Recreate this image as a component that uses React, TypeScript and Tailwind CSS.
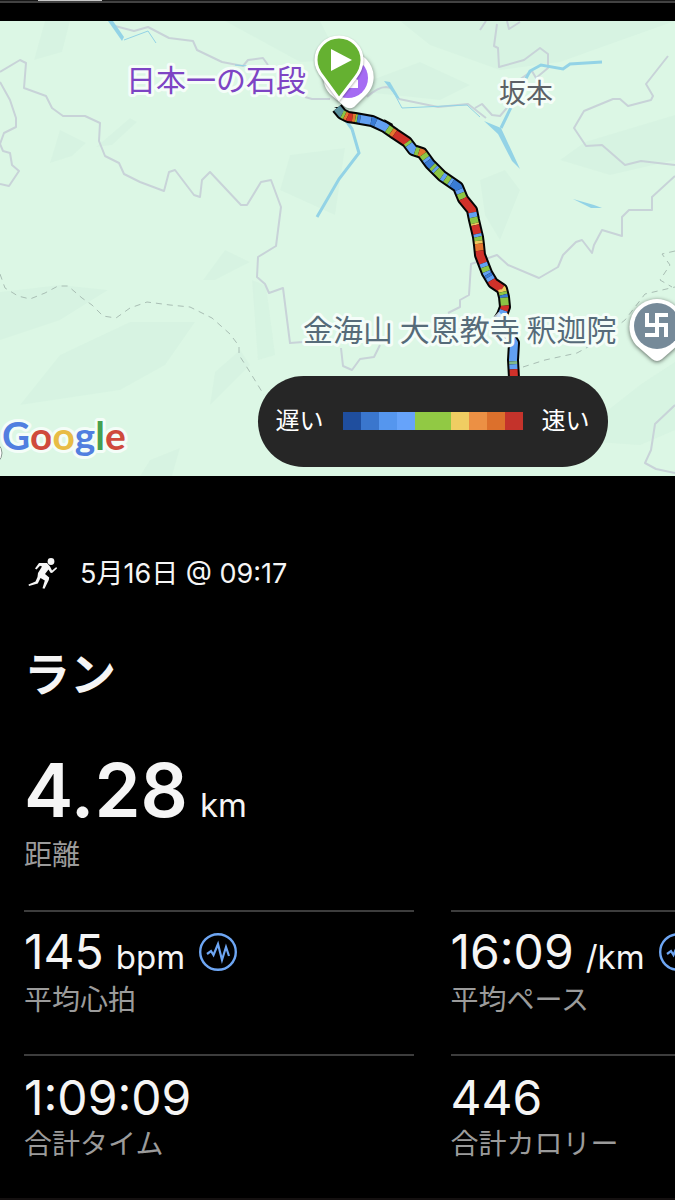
import type { ReactNode } from "react";

type Stat = {
  label: string;
  value: string;
  unit?: string;
  hasTrend?: boolean;
};

const STATS: Stat[] = [
  { label: "平均心拍", value: "145", unit: "bpm", hasTrend: true },
  { label: "平均ペース", value: "16:09", unit: "/km", hasTrend: true },
  { label: "合計タイム", value: "1:09:09" },
  { label: "合計カロリー", value: "446" },
];

const LEGEND_COLORS = [
  "#1f4e9e",
  "#3a76cd",
  "#5596ee",
  "#66a3fa",
  "#91c944",
  "#91c944",
  "#f0cd62",
  "#ec9044",
  "#dc702c",
  "#c4332b",
];

const BLUE = "#3a7bd5";
const LIGHT = "#62a0f2";
const GREEN = "#8cc544";
const YELLOW = "#ecc95c";
const ORANGE = "#e5752f";
const RED = "#d0312a";

const ROUTE =
  "M337 108L342 114L348 117L355 118L372 121L385 127L395 134L407 142L413 150L422 153L430 164L442 176L458 187L463 199L472 210L474 220L478 237L479 245L480 255L487 273L493 283L502 289L504 297L505 307L502 315L497 323L510 337L514 343L513 360L514 378";

// [end distance along the route, pace colour]
const PACE: [number, string][] = [
  [8, "#5a93a0"],
  [11, GREEN],
  [14, ORANGE],
  [19, RED],
  [22, ORANGE],
  [24, GREEN],
  [27, BLUE],
  [38, LIGHT],
  [43, BLUE],
  [56, LIGHT],
  [61, GREEN],
  [65, ORANGE],
  [80, RED],
  [83, GREEN],
  [92, LIGHT],
  [96, GREEN],
  [101, ORANGE],
  [106, GREEN],
  [109, LIGHT],
  [116, BLUE],
  [119, GREEN],
  [122, LIGHT],
  [130, GREEN],
  [134, LIGHT],
  [139, GREEN],
  [142, LIGHT],
  [152, BLUE],
  [156, LIGHT],
  [162, GREEN],
  [179, RED],
  [184, LIGHT],
  [190, GREEN],
  [192, YELLOW],
  [201, RED],
  [204, LIGHT],
  [208, GREEN],
  [211, YELLOW],
  [218, ORANGE],
  [231, RED],
  [235, LIGHT],
  [240, GREEN],
  [243, LIGHT],
  [246, BLUE],
  [250, LIGHT],
  [264, RED],
  [267, YELLOW],
  [270, GREEN],
  [273, BLUE],
  [281, GREEN],
  [286, RED],
  [345, LIGHT],
  [348, "#7fb98a"],
  [353, LIGHT],
  [370, RED],
];

function MapLabel({
  x,
  y,
  size,
  color,
  children,
}: {
  x: number;
  y: number;
  size: number;
  color: string;
  children: ReactNode;
}) {
  return (
    <text
      x={x}
      y={y}
      fontSize={size}
      fill={color}
      stroke="#f4fdf8"
      strokeWidth={6}
      strokeLinejoin="round"
      paintOrder="stroke"
    >
      {children}
    </text>
  );
}

function RouteMap() {
  return (
    <svg viewBox="0 21 675 455" className="block h-auto w-full bg-[#dcf7e5]">
      {/* Terrain shading */}
      <g fill="#cfeedd" opacity="0.35">
        <path d="M45 21H70L62 52L34 60Z" />
        <path d="M60 130L86 143L72 156L50 163Z" />
        <path d="M130 118L137 122L112 145L96 147Z" />
        <path d="M225 21H320L340 60L300 62Z" />
        <path d="M400 21H675L560 62L500 70L430 45Z" />
        <path d="M345 90L420 62L470 85L440 100Z" />
        <path d="M290 155L345 148L335 215L280 190Z" />
        <path d="M480 180L505 170L520 190L500 240L485 215Z" />
        <path d="M560 160L585 142L675 115V160L610 175Z" />
        <path d="M0 292L60 285L108 290L60 320L0 340Z" />
        <path d="M130 322H195L165 365L120 390L20 405L60 355Z" />
        <path d="M203 280L225 250L250 262L215 280Z" />
        <path d="M240 350L215 372L210 405L250 365Z" />
        <path d="M252 280L266 286L275 355L258 360Z" />
        <path d="M570 440L640 385L675 362V430L640 445Z" />
        <path d="M150 460L180 448L172 476H140Z" />
      </g>

      {/* Boundaries and minor roads */}
      <g fill="none" stroke="#c8d3d8" strokeWidth="2" strokeLinejoin="round">
        <path d="M0 72L20 60L26 63L24 88L46 96L52 108L63 116H85L100 123L99 141L105 156L119 163L124 174L140 182L164 191L169 172L175 170L194 195L200 197L202 180L210 172L241 205H247L261 182L271 180L281 207L276 246L258 257L257 277L265 284L269 293L283 288L290 343L303 342" />
        <path d="M0 82L10 100L16 118V127L4 133L0 144L3 151L10 153L12 165L19 171L9 186L0 184" />
        <path d="M115 26L134 31L148 27L169 38L193 41L197 50L222 62L243 66L248 60L263 58L268 65" />
        <path d="M305 97L312 99H330M367 97Q378 87 386 87L391 88L399 99L438 107L468 104L486 118M475 108L482 104L492 115L500 116L512 102L516 82L532 71L536 78L548 68V54L540 48L524 60L499 67L498 48L494 46L497 24" />
        <path d="M480 30L486 21M507 21L509 29L520 22" />
        <path d="M668 56L646 84L653 96L651 100L628 106L620 99H613L584 111L574 128L586 146L602 145L625 165L641 161L675 165" />
        <path d="M675 176L652 197V210H629L622 217V236L602 230L594 245L592 253L582 240L576 242L563 255L558 267L539 278L508 265L497 255L471 264L469 295L460 300V307L448 313" />
        <path d="M341 348L343 366L352 370L360 359L374 357L380 345" />
        <path d="M675 405L655 424L651 450L645 463L656 469L675 473" />
      </g>
      <g fill="none" stroke="#a9beb4" strokeWidth="1" strokeDasharray="6 5">
        <path d="M0 274L5 288L18 296L30 299L45 293L58 286L68 286L82 298L92 305L103 316L116 318L130 308L147 302L170 305L190 307L212 318L230 334L239 346V355L248 369L264 395" />
        <path d="M523 367L545 360L577 353L597 342L625 320L645 294L675 287M675 251L662 254L670 265L660 280L672 287" />
      </g>

      {/* Water */}
      <g fill="none" stroke="#93d3e6" strokeWidth="2">
        <path d="M339 111L352 129L359 153L339 179L317 217" strokeWidth="3" />
        <path d="M124 40L148 31L156 43" strokeWidth="1" />
        <path d="M388 82L402 108L467 105L480 117M235 65L248 66" strokeWidth="1" />
        <path d="M602 62L570 64L563 69L541 65L530 71L517 95L501 128" strokeWidth="3" />
      </g>
      <g fill="#93d3e6">
        <path d="M108 21H113L124 37L122 41Z" />
        <path d="M384 81L390 82L400 99L397 98Z" />
        <path d="M484 121L501 128L520 169L512 161L498 134Z" />
        <path d="M573 199L594 205L602 208L591 208Z" />
      </g>

      {/* Route with pace colours */}
      <path d={ROUTE} fill="none" stroke="#050505" strokeWidth="12" strokeLinejoin="round" />
      <path d="M384 119L393 124L390 130ZM334 107L342 107L348 113Z" fill="#050505" />
      {PACE.map(([end, color], i) => {
        const start = i === 0 ? 0 : PACE[i - 1][0];
        return (
          <path
            key={end}
            d={ROUTE}
            fill="none"
            stroke={color}
            strokeWidth="8"
            strokeLinejoin="round"
            strokeDasharray={`0 ${start} ${end - start} 1000`}
          />
        );
      })}
      <path d="M503 316L496 323L510 338" fill="none" stroke="#e2eff8" strokeWidth="12" opacity="0.8" />

      <g className="font-['Noto_Sans_CJK_JP',sans-serif]">
        <MapLabel x={126} y={91} size={30} color="#7d44c4">
          日本一の石段
        </MapLabel>
        <MapLabel x={499} y={103} size={27} color="#5c6166">
          坂本
        </MapLabel>
        <MapLabel x={303} y={341} size={30} color="#566b79">
          金海山 大恩教寺 釈迦院
        </MapLabel>
      </g>

      {/* Landmark pin */}
      <path
        d="M348 52A25 25 0 0 1 367 94L354 107Q349 110 344 106L330 94A25 25 0 0 1 348 52Z"
        fill="#fff"
        className="drop-shadow-[0_1px_2px_rgba(0,0,0,0.5)]"
      />
      <circle cx="348" cy="78" r="20" fill="#a56bf3" />
      <path d="M345 88L354 78L358 80V88Z" fill="#fff" />

      {/* Start pin */}
      <path
        d="M339 99L323 77C318 71 316 67 316 60A23 23 0 0 1 362 60C362 67 359 73 355 78Z"
        fill="#65b131"
        stroke="#fff"
        strokeWidth="3"
        className="drop-shadow-[0_1px_1px_rgba(0,0,0,0.35)]"
      />
      <path d="M331 49L352 60L331 71Z" fill="#fff" />

      {/* Temple pin */}
      <path
        d="M657 299A28 28 0 0 1 678 345L662 359Q657 363 652 359L636 345A28 28 0 0 1 657 299Z"
        fill="#fff"
        className="drop-shadow-[0_1px_2px_rgba(0,0,0,0.6)]"
      />
      <circle cx="657" cy="326" r="23" fill="#768a99" />
      <path
        d="M647 313V325H666V337M668 315H657V335H645"
        fill="none"
        stroke="#fff"
        strokeWidth="4"
      />
      <circle cx="-10" cy="453" r="12" fill="#fff" stroke="#8b9a92" />

      <text
        x="2"
        y="450"
        fontSize="39"
        stroke="#f4fdf8"
        strokeWidth="6"
        strokeLinejoin="round"
        paintOrder="stroke"
        className="font-[Lato,sans-serif] font-bold"
      >
        <tspan fill="#517fe0">G</tspan>
        <tspan fill="#cf4a3c">o</tspan>
        <tspan fill="#e8bc45">o</tspan>
        <tspan fill="#517fe0">g</tspan>
        <tspan fill="#46a04f">l</tspan>
        <tspan fill="#cf4a3c">e</tspan>
      </text>
    </svg>
  );
}

function PaceLegend() {
  return (
    <div className="absolute right-[10%] bottom-[2%] flex h-[91px] items-center gap-[19px] rounded-full bg-[#262626] px-[18px] text-2xl text-white">
      <span>遅い</span>
      <div className="flex">
        {LEGEND_COLORS.map((color, i) => (
          <span key={i} className="h-[18px] w-[18px]" style={{ backgroundColor: color }} />
        ))}
      </div>
      <span>速い</span>
    </div>
  );
}

function RunnerIcon() {
  return (
    <svg viewBox="0 0 30 32" className="h-8 w-[30px]" fill="#f5f5f5" aria-hidden="true">
      <circle cx="23" cy="3.500" r="3.400" />
      <path d="M11 5H19L22 8.500L24 12.500L28.300 9L29 10.500L24 15L22.500 14.800L20.500 11.500L17 16L21.200 19.500L20.800 22L16.500 30.800L14.500 30.300L16.800 22.500L12.500 20L9.800 25.500L1 28L0.500 26.500L7.500 23.500L9.500 19L10 15L14 8.500L12 7.800L8.500 11.500L7 10.500Z" />
    </svg>
  );
}

function TrendButton({ label }: { label: string }) {
  return (
    <button type="button" aria-label={label} className="ml-[14px] shrink-0">
      <svg viewBox="0 0 38 38" className="block h-[38px] w-[38px]" fill="none" stroke="#6ea6f3">
        <circle cx="19" cy="19" r="17.800" strokeWidth="2.400" />
        <path d="M8 21L12 18L14.500 22L19 11L23 27L27 14L30 23" strokeWidth="2.200" />
      </svg>
    </button>
  );
}

function StatCell({ stat }: { stat: Stat }) {
  return (
    <div className="flex h-36 flex-col-reverse justify-end border-t-2 border-[#3d3d3d] pt-2">
      <dt className="text-[28px] leading-8 text-[#9b9b9b]">{stat.label}</dt>
      <dd className="flex h-16 items-center whitespace-nowrap">
        <span className="pt-1 text-[48px] leading-[64px]">
          {stat.value}
          {stat.unit && <span className="ml-3 text-[33px]">{stat.unit}</span>}
        </span>
        {stat.hasTrend && <TrendButton label={stat.label} />}
      </dd>
    </div>
  );
}

export default function App() {
  return (
    <main className="min-h-screen overflow-hidden bg-black font-[Inter,'Noto_Sans_CJK_JP',sans-serif] text-[#f5f5f5]">
      <div className="mb-[18px] h-[3px] border-b-2 border-[#424242] bg-[#161616]">
        <div className="ml-[38px] h-px w-16 bg-[#c8c8c8]" />
      </div>

      <section className="relative">
        <RouteMap />
        <PaceLegend />
      </section>

      <section className="px-6 pt-[82px]">
        <div className="flex items-center gap-[22px] pl-1">
          <RunnerIcon />
          <time className="text-[27px] leading-8">5月16日 @ 09:17</time>
        </div>
        <h1 className="mt-[52px] text-[46px] leading-[64px] font-bold">ラン</h1>
        <p className="mt-[50px] text-[74px] leading-[68px] font-semibold">
          4.28<span className="ml-3 text-[33px] font-normal">km</span>
        </p>
        <p className="text-[28px] leading-8 text-[#9b9b9b]">距離</p>
      </section>

      {/* The second column runs past the right edge of the screen */}
      <dl className="mt-[39px] grid w-[128%] grid-cols-2 gap-x-[37px] px-6">
        {STATS.map((stat) => (
          <StatCell key={stat.label} stat={stat} />
        ))}
      </dl>
      <div className="h-0.5 bg-[#141010]" />
    </main>
  );
}
